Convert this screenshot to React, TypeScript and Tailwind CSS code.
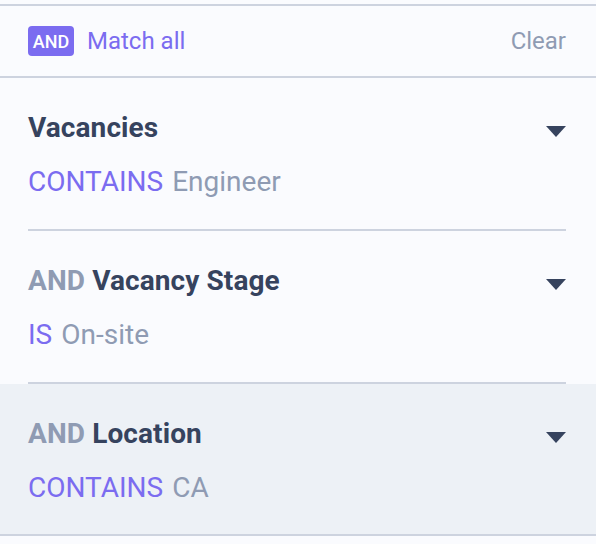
import React from "react";

type Filter = {
  joiner?: string;
  field: string;
  op: string;
  value: string;
  active?: boolean;
};

const filters: Filter[] = [
  { field: "Vacancies", op: "CONTAINS", value: "Engineer" },
  { joiner: "AND", field: "Vacancy Stage", op: "IS", value: "On-site" },
  { joiner: "AND", field: "Location", op: "CONTAINS", value: "CA", active: true },
];

function Caret() {
  return (
    <svg width="20" height="11" viewBox="0 0 20 11" className="mt-[6px] shrink-0" aria-hidden>
      <polygon points="0,0 20,0 10,11" fill="#36435e" />
    </svg>
  );
}

function FilterRow({ filter, last }: { filter: Filter; last: boolean }) {
  return (
    <div className={filter.active ? "bg-[#edf1f6]" : ""}>
      <div
        className={
          "ml-[28px] mr-[30px] flex flex-col gap-[18px] pt-[32px] " +
          (last ? "pb-[28px]" : "pb-[29px] border-b-2 border-[#cdd3df]")
        }
      >
        <div className="flex h-[36px] items-center justify-between">
          <div className="text-[28px] font-bold leading-[36px] tracking-[0.1px] text-[#36435e]">
            {filter.joiner && <span className="text-[#8f9bb3]">{filter.joiner} </span>}
            {filter.field}
          </div>
          <Caret />
        </div>
        <div className="text-[28px] leading-[36px]">
          <span className="text-[#7b6cf0]">{filter.op}</span>
          <span className="ml-[9px] text-[#8f9bb3]">{filter.value}</span>
        </div>
      </div>
    </div>
  );
}

export default function App() {
  return (
    <div className="min-h-[544px] w-[596px] bg-[#fafbfe] pt-[4px] font-['Roboto',sans-serif]">
      <div className="flex h-[74px] items-center justify-between border-y-2 border-[#cdd3df] pl-[28px] pr-[30px]">
        <div className="flex items-center gap-[13px]">
          <span className="flex h-[30px] w-[46px] items-center justify-center rounded-[4px] bg-[#7b6cf0] text-[18px] font-medium text-white">
            AND
          </span>
          <span className="text-[24px] text-[#7b6cf0]">Match all</span>
        </div>
        <button type="button" className="text-[24px] text-[#8f9bb3]">
          Clear
        </button>
      </div>
      <div className="border-b-2 border-[#cdd3df]">
        {filters.map((f, i) => (
          <FilterRow key={f.field} filter={f} last={i === filters.length - 1} />
        ))}
      </div>
    </div>
  );
}
